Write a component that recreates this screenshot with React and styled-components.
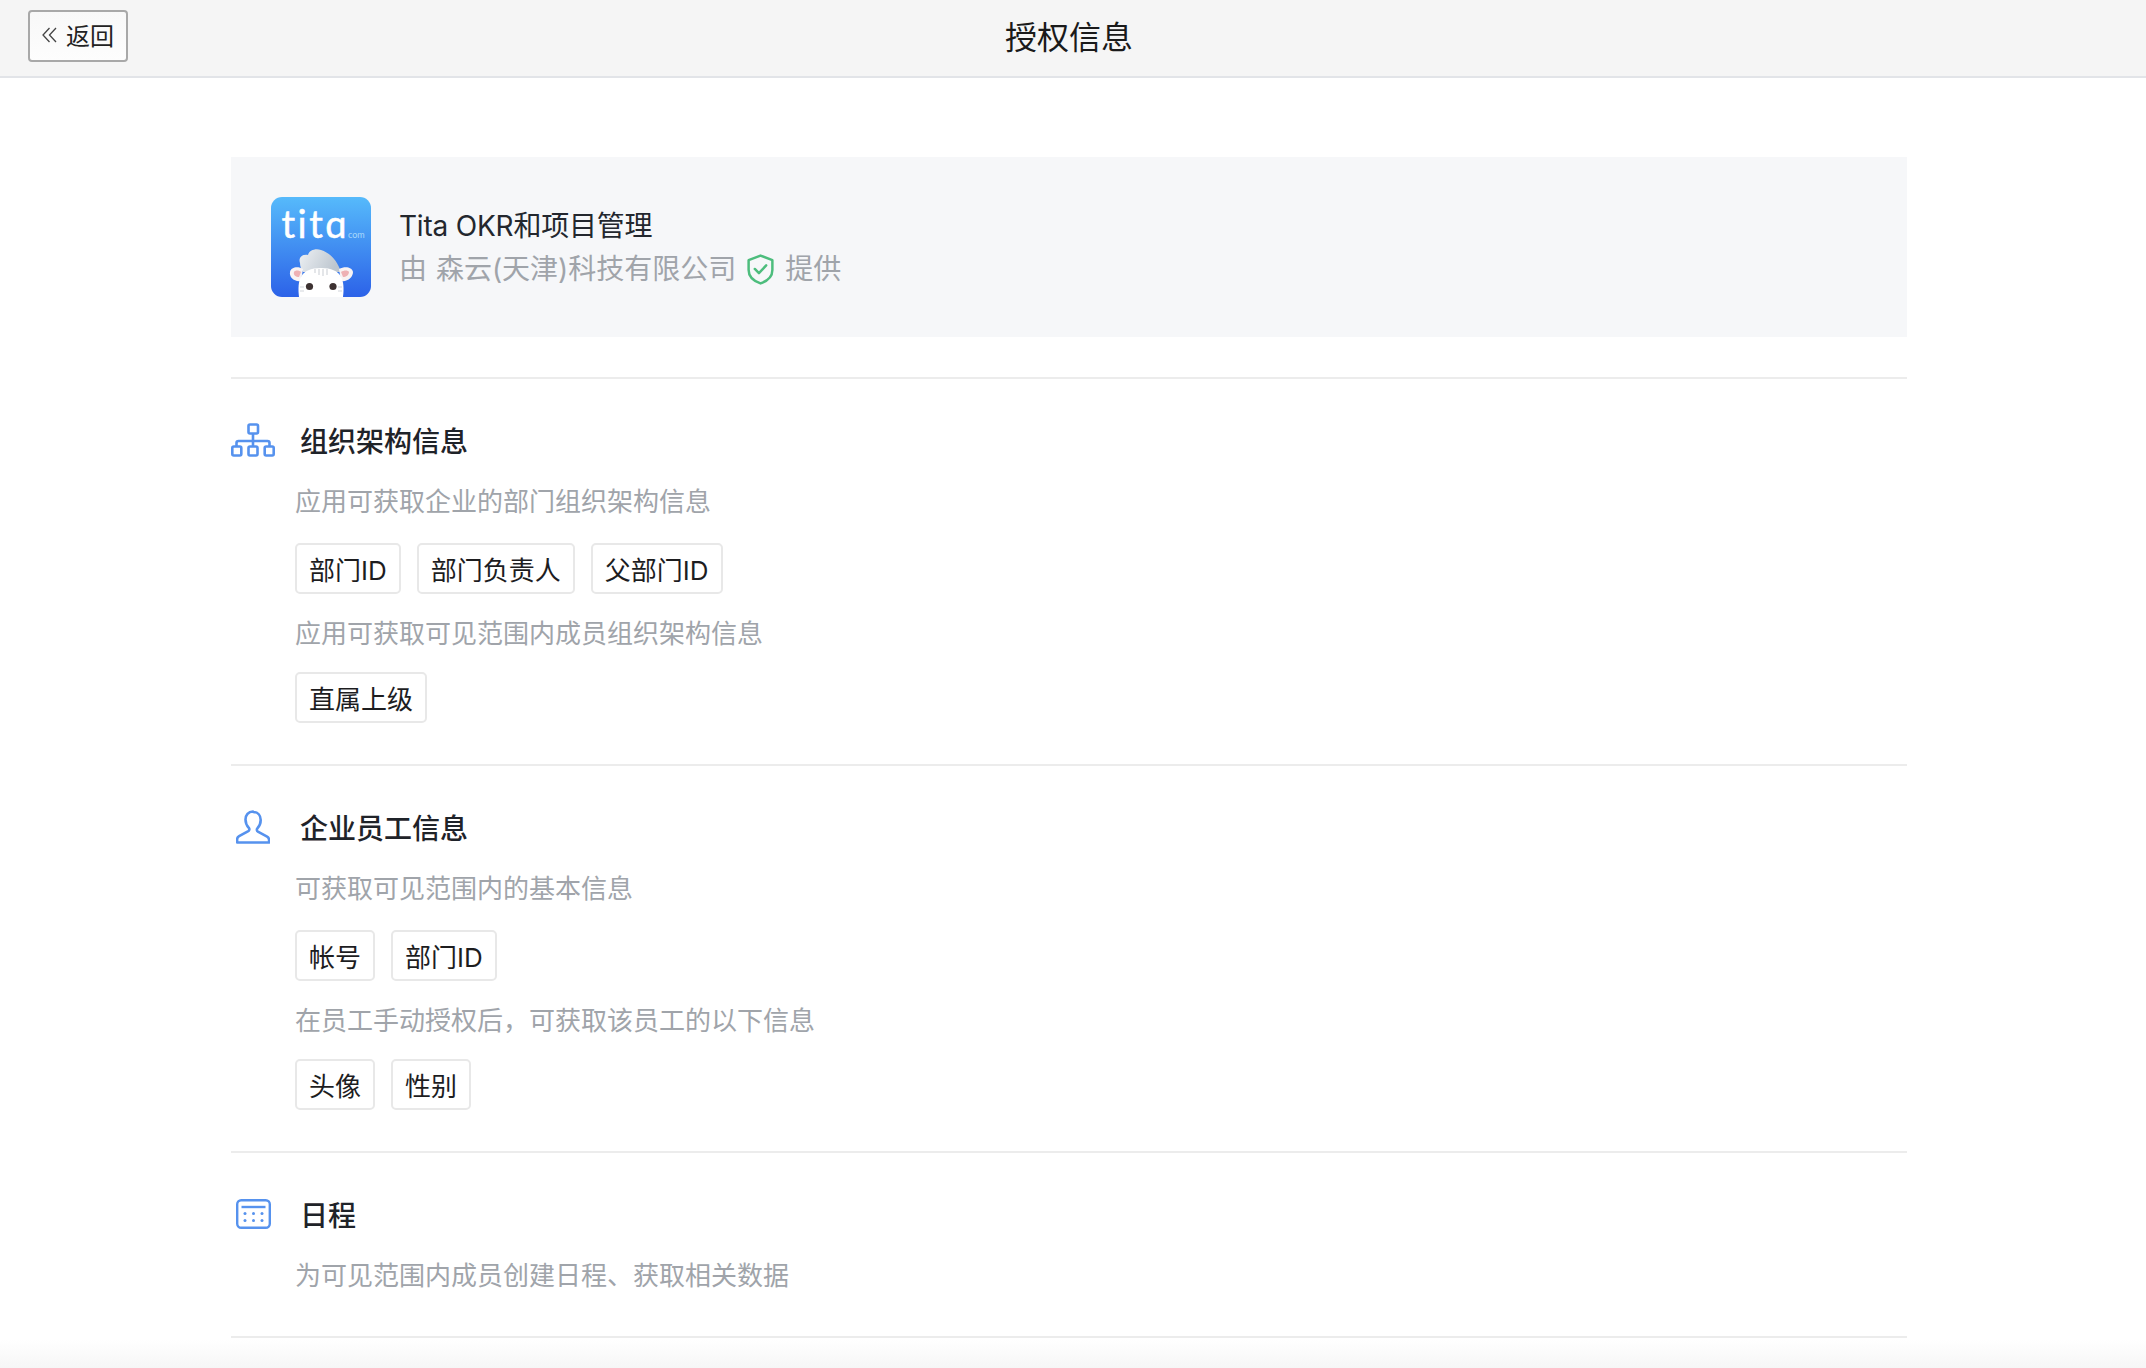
import React from 'react';
import styled, { createGlobalStyle } from 'styled-components';

const BLUE = '#5692ee';
const LINE = '#ececec';
const GREY = '#a0a4aa';

const GlobalStyle = createGlobalStyle`
  html, body {
    margin: 0;
    padding: 0;
    background: #fff;
  }
  body {
    font-family: Inter, "Noto Sans CJK SC", sans-serif;
    color: #1f2329;
  }
`;

const Page = styled.div`
  position: relative;
  height: 1368px;
  overflow: hidden;
  background: linear-gradient(to bottom, #fff 1340px, #f6f6f6 1368px);
`;
const Header = styled.header`
  position: relative;
  height: 76px;
  box-sizing: border-box;
  padding: 0 8px 6px 0;
  display: flex;
  align-items: center;
  justify-content: center;
  background: #f5f5f5;
  box-shadow: 0 2px 0 #e2e4e8;
`;
const BackButton = styled.button`
  position: absolute;
  left: 28px;
  top: 10px;
  width: 100px;
  height: 52px;
  box-sizing: border-box;
  display: flex;
  align-items: center;
  justify-content: center;
  gap: 9px;
  padding: 0 0 3px;
  font: inherit;
  font-size: 24px;
  color: #222;
  background: linear-gradient(#f8f8f8, #fdfdfd);
  border: 2px solid #a8a8a8;
  border-radius: 4px;
`;
const PageTitle = styled.h1`
  margin: 0;
  font-size: 32px;
  font-weight: 400;
  color: #1a1a1a;
`;
const Main = styled.main`
  margin: 0 239px 0 231px;
  padding-top: 81px;
`;
const AppCard = styled.div`
  height: 180px;
  box-sizing: border-box;
  display: flex;
  align-items: center;
  gap: 28px;
  padding: 0 40px;
  margin-bottom: 40px;
  background: #f6f7f9;
`;
const AppName = styled.div`
  padding-top: 1px;
  font-size: 28px;
  line-height: 40px;
  letter-spacing: -0.2px;
  color: #23272e;
`;
const Provider = styled.div`
  display: flex;
  align-items: center;
  gap: 11px;
  margin-top: 3px;
  font-size: 28px;
  line-height: 40px;
  word-spacing: 1px;
  color: ${GREY};
`;
const Section = styled.section`
  padding: 39px 0 ${props => props.$bottom ?? 41}px;
  border-top: 2px solid ${LINE};
`;
const SectionHead = styled.div`
  display: flex;
  align-items: center;
  height: 44px;
`;
const IconSlot = styled.div`
  width: 44px;
  margin-right: 25px;
  display: flex;
  justify-content: center;
`;
const SectionTitle = styled.h2`
  margin: 0;
  font-size: 28px;
  font-weight: 500;
  color: #1f2329;
`;
const Body = styled.div`
  padding-left: 64px;
`;
const Desc = styled.p`
  margin: 22px 0 0;
  font-size: 26px;
  line-height: 36px;
  color: ${GREY};
`;
const TagRow = styled.div`
  display: flex;
  gap: 16px;
  margin-top: ${props => (props.$tight ? 20 : 23)}px;
`;
const Tag = styled.span`
  height: 51px;
  box-sizing: border-box;
  display: flex;
  align-items: center;
  padding: 0 12px 1px;
  font-size: 26px;
  color: #1d1d1f;
  background: #fff;
  border: 2px solid #e8e8e8;
  border-radius: 5px;
`;

const BackIcon = () => (
  <svg width="15" height="16" viewBox="0 0 15 16" fill="none" stroke="#444" strokeWidth="1.3">
    <path d="M7.500 1 1 8l6.500 7M14 1 7.500 8l6.500 7" />
  </svg>
);

const ShieldIcon = () => (
  <svg width="27" height="31" viewBox="0 0 26 30" fill="none" stroke="#4dbd7d" strokeWidth="2.4" strokeLinejoin="round" strokeLinecap="round">
    <path d="M13 1.500 24.500 6v9.500c0 6-4.600 10.600-11.500 13-6.900-2.400-11.500-7-11.500-13V6z" />
    <path d="m7.500 14.500 4 4 7-7.500" />
  </svg>
);

const OrgIcon = () => (
  <svg width="44" height="34" viewBox="0 0 44 34" fill="none" stroke={BLUE} strokeWidth="2.600" strokeLinejoin="round">
    <rect x="17.500" y="1.500" width="9.500" height="9" rx="1.500" />
    <path d="M22 10.500V18M5.500 23v-3a2 2 0 0 1 2-2h29a2 2 0 0 1 2 2v3M22 18v5" />
    <rect x="1.300" y="23.500" width="9" height="9" rx="1.500" />
    <rect x="17.500" y="23.500" width="9" height="9" rx="1.500" />
    <rect x="33.700" y="23.500" width="9" height="9" rx="1.500" />
  </svg>
);

const PersonIcon = () => (
  <svg width="34" height="34" viewBox="0 0 34 34" fill="none" stroke={BLUE} strokeWidth="2.600" strokeLinejoin="round">
    <path d="M17 1.500c-4.700 0-7.500 3.500-7.500 8 0 3.600 1.400 6.300 3.300 8.400.9 1 .7 2.600-.5 3.300l-9.200 5c-1.300.7-2 2-2 3.300V32.500h32v-2.500c0-1.300-.7-2.600-2-3.300l-9.200-5c-1.200-.7-1.400-2.300-.5-3.300 1.900-2.100 3.300-4.800 3.300-8.400 0-4.500-2.800-8-7.500-8z" />
  </svg>
);

const CalendarIcon = () => (
  <svg width="35" height="30" viewBox="0 0 35 30" fill="none" stroke={BLUE} strokeWidth="2.400">
    <rect x="1.200" y="1.200" width="32.600" height="27.600" rx="4" />
    <path d="M5.500 8h24" />
    <g fill={BLUE} stroke="none">
      <circle cx="9" cy="14.500" r="1.500" />
      <circle cx="17.500" cy="14.500" r="1.500" />
      <circle cx="26" cy="14.500" r="1.500" />
      <circle cx="9" cy="21.500" r="1.500" />
      <circle cx="17.500" cy="21.500" r="1.500" />
      <circle cx="26" cy="21.500" r="1.500" />
    </g>
  </svg>
);

const TitaLogo = () => (
  <svg width="100" height="100" viewBox="0 0 100 100" style={{ flex: 'none' }}>
    <defs>
      <linearGradient id="titaBg" x1="0" y1="0" x2="0" y2="1">
        <stop offset="0" stopColor="#56bafb" />
        <stop offset="1" stopColor="#2c62e8" />
      </linearGradient>
      <linearGradient id="titaHair" x1="0" y1="0" x2="1" y2="0.300">
        <stop offset="0" stopColor="#eef1f4" />
        <stop offset="1" stopColor="#bdc6cf" />
      </linearGradient>
      <clipPath id="titaClip">
        <rect width="100" height="100" rx="11" />
      </clipPath>
    </defs>
    <g clipPath="url(#titaClip)">
      <rect width="100" height="100" fill="url(#titaBg)" />
      <text x="10.500" y="41" fontFamily="Lato, sans-serif" fontSize="38" fill="#fff" stroke="#fff" strokeWidth="0.500" letterSpacing="2.500">titɑ</text>
      <text x="77" y="41" fontFamily="Lato, sans-serif" fontSize="9" fill="#a9d8fb">com</text>
      <path d="M29 66c-2-6 3-9 8-8 1-5 8-7 13-5 9 3 16 10 20 22H32c-2-3-3-6-3-9z" fill="url(#titaHair)" />
      <path d="M30 84c-7 1-12-4-11-9 1-5 8-6 13-3zM70 84c7 1 12-4 12-9-1-5-8-6-14-3z" fill="#f8f3f3" />
      <path d="M28 80c-3 0-6-2-5-5 1-2 5-2 7 0zM72 80c3 0 6-2 6-5-1-2-5-2-8 0z" fill="#eeb1b4" />
      <path d="M28 100c-2-17 1-29 22-29s24 12 22 29z" fill="#fff" />
      <path d="M48 72v6M52 72v7M56 72v6M44 72v4M29 90h4M29 94h4M67 90h4M67 94h4" stroke="#d2d5db" strokeWidth="1.200" />
      <circle cx="38.500" cy="89.500" r="3.600" fill="#3d3232" />
      <circle cx="62" cy="89.500" r="3.600" fill="#3d3232" />
    </g>
  </svg>
);

const App = () => (
  <Page>
    <GlobalStyle />
    <Header>
      <BackButton>
        <BackIcon />
        返回
      </BackButton>
      <PageTitle>授权信息</PageTitle>
    </Header>
    <Main>
      <AppCard>
        <TitaLogo />
        <div>
          <AppName>Tita OKR和项目管理</AppName>
          <Provider>
            <span>由 森云(天津)科技有限公司</span>
            <ShieldIcon />
            <span>提供</span>
          </Provider>
        </div>
      </AppCard>

      <Section>
        <SectionHead>
          <IconSlot><OrgIcon /></IconSlot>
          <SectionTitle>组织架构信息</SectionTitle>
        </SectionHead>
        <Body>
          <Desc>应用可获取企业的部门组织架构信息</Desc>
          <TagRow>
            <Tag>部门ID</Tag>
            <Tag>部门负责人</Tag>
            <Tag>父部门ID</Tag>
          </TagRow>
          <Desc>应用可获取可见范围内成员组织架构信息</Desc>
          <TagRow $tight>
            <Tag>直属上级</Tag>
          </TagRow>
        </Body>
      </Section>

      <Section>
        <SectionHead>
          <IconSlot><PersonIcon /></IconSlot>
          <SectionTitle>企业员工信息</SectionTitle>
        </SectionHead>
        <Body>
          <Desc>可获取可见范围内的基本信息</Desc>
          <TagRow>
            <Tag>帐号</Tag>
            <Tag>部门ID</Tag>
          </TagRow>
          <Desc>在员工手动授权后，可获取该员工的以下信息</Desc>
          <TagRow $tight>
            <Tag>头像</Tag>
            <Tag>性别</Tag>
          </TagRow>
        </Body>
      </Section>

      <Section $bottom={42}>
        <SectionHead>
          <IconSlot><CalendarIcon /></IconSlot>
          <SectionTitle>日程</SectionTitle>
        </SectionHead>
        <Body>
          <Desc>为可见范围内成员创建日程、获取相关数据</Desc>
        </Body>
      </Section>
      <Section $bottom={0} />
    </Main>
  </Page>
);

export default App;
